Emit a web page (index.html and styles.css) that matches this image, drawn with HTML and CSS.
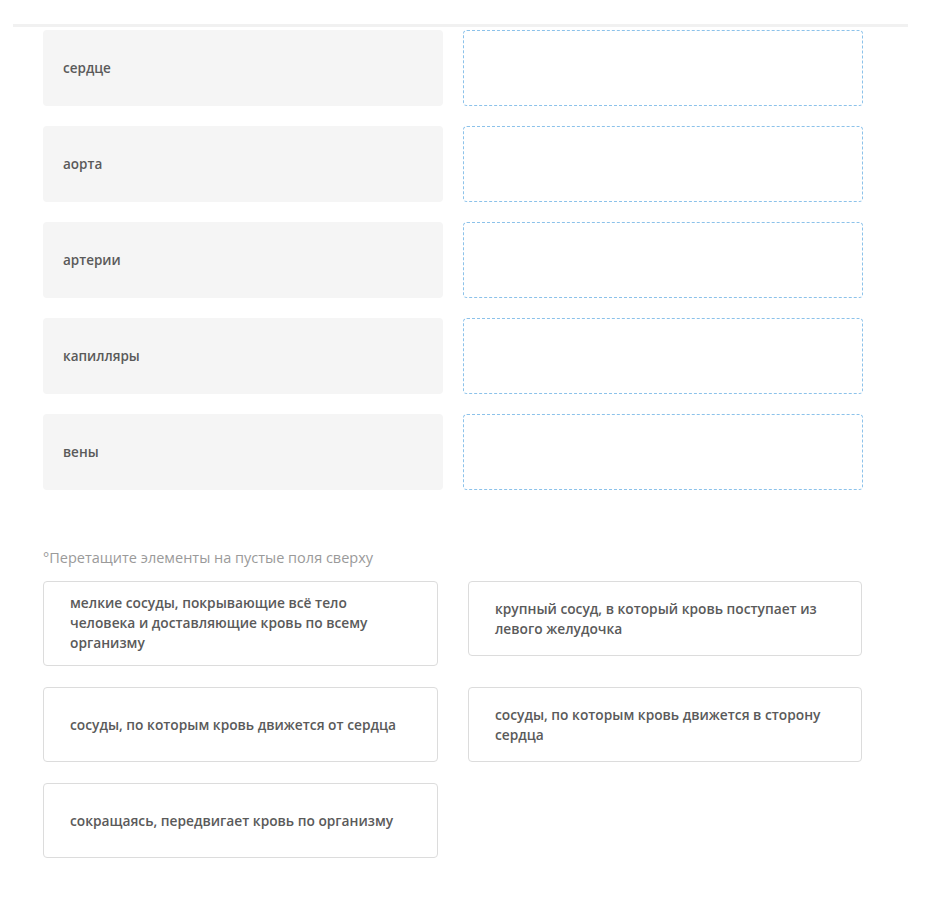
FILE: index.html
```html
<!DOCTYPE html>
<html lang="ru">
<head>
  <meta charset="UTF-8">
  <meta name="viewport" content="width=device-width, initial-scale=1">
  <title>Кровеносная система</title>
  <link rel="stylesheet" href="styles.css">
</head>
<body>
  <div class="topbar"></div>
  <div class="task">
    <div class="pairs">
      <div class="term">сердце</div>
      <div class="drop"></div>
      <div class="term">аорта</div>
      <div class="drop"></div>
      <div class="term">артерии</div>
      <div class="drop"></div>
      <div class="term">капилляры</div>
      <div class="drop"></div>
      <div class="term">вены</div>
      <div class="drop"></div>
    </div>

    <p class="hint">°Перетащите элементы на пустые поля сверху</p>

    <div class="options">
      <div class="option tall">мелкие сосуды, покрывающие всё тело человека и доставляющие кровь по всему организму</div>
      <div class="option">крупный сосуд, в который кровь поступает из левого желудочка</div>
      <div class="option">сосуды, по которым кровь движется от сердца</div>
      <div class="option">сосуды, по которым кровь движется в сторону сердца</div>
      <div class="option">сокращаясь, передвигает кровь по организму</div>
    </div>
  </div>
</body>
</html>
```

FILE: styles.css
```css
body { margin: 0; background: #fff; font-family: 'Open Sans', sans-serif; color: #555; }
.topbar { height: 3px; margin: 24px 25px 0 13px; background: #f1f1f1; }
.task { padding: 3px 71px 0 43px; }

.pairs { display: grid; grid-template-columns: 400px 400px; column-gap: 20px; row-gap: 20px; }
.term { height: 76px; box-sizing: border-box; background: #f5f5f5; border-radius: 4px; padding: 0 20px; display: flex; align-items: center; font-size: 13.5px; font-weight: 600; color: #5a5a5a; }
.drop { height: 76px; box-sizing: border-box; border: 1px dashed #8cc2ea; border-radius: 4px; }

.hint { margin: 58px 0 13px; font-size: 14.5px; color: #9a9a9a; line-height: 20px; }

.options { display: grid; grid-template-columns: 395px 394px; column-gap: 30px; row-gap: 21px; align-items: start; }
.option { min-height: 75px; box-sizing: border-box; border: 1px solid #dcdcdc; border-radius: 4px; padding: 10px 26px; display: flex; align-items: center; font-size: 13.75px; font-weight: 600; line-height: 20px; color: #5a5a5a; }
.option.tall { padding: 11px 45px 12px 26px; }
```
